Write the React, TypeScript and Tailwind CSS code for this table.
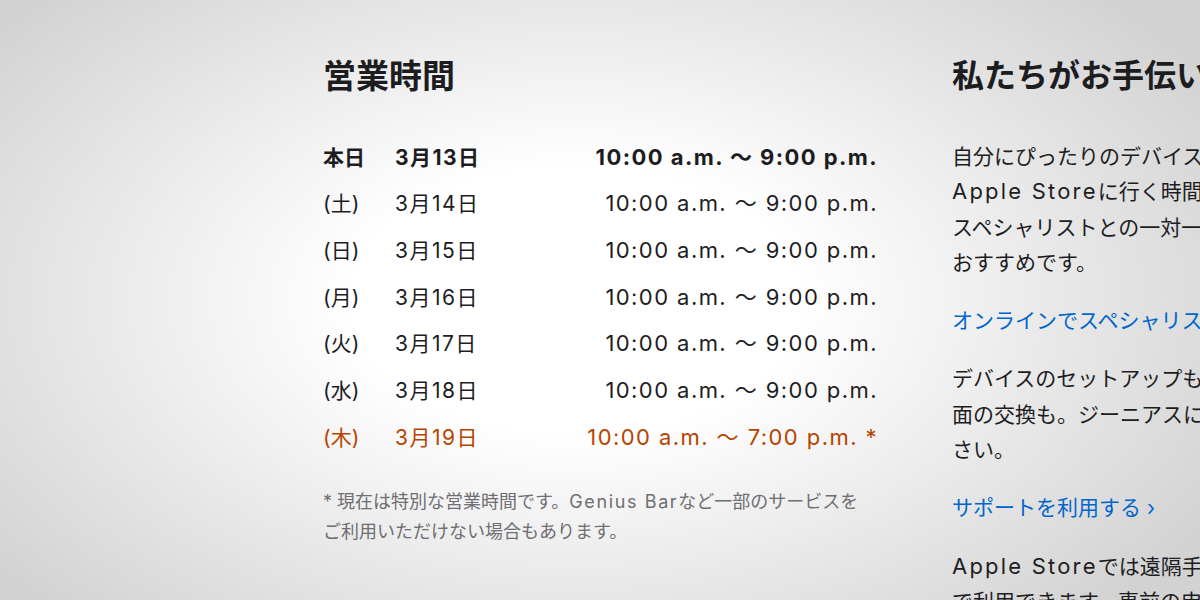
import React from 'react';

const font = { fontFamily: 'Inter, "Noto Sans CJK JP", sans-serif' };

type Row = { day: string; date: string; time: string; today?: boolean; special?: boolean };

const rows: Row[] = [
  { day: '本日', date: '3月13日', time: '10:00 a.m. 〜 9:00 p.m.', today: true },
  { day: '(土)', date: '3月14日', time: '10:00 a.m. 〜 9:00 p.m.' },
  { day: '(日)', date: '3月15日', time: '10:00 a.m. 〜 9:00 p.m.' },
  { day: '(月)', date: '3月16日', time: '10:00 a.m. 〜 9:00 p.m.' },
  { day: '(火)', date: '3月17日', time: '10:00 a.m. 〜 9:00 p.m.' },
  { day: '(水)', date: '3月18日', time: '10:00 a.m. 〜 9:00 p.m.' },
  { day: '(木)', date: '3月19日', time: '10:00 a.m. 〜 7:00 p.m. *', special: true },
];

// latin runs in the reference are set wider than Inter
const Latin = ({ children }: { children: React.ReactNode }) => (
  <span className="text-[22px] tracking-[0.1em]">{children}</span>
);

const HoursRow = ({ row }: { row: Row }) => {
  const color = row.special ? 'text-[#b64400]' : 'text-[#1d1d1f]';
  const weight = row.today ? 'font-bold' : 'font-normal';
  return (
    <div className={`flex items-center h-[46.67px] text-[21px] ${color} ${weight}`}>
      <span className="w-[72px] shrink-0">{row.day}</span>
      <span className="tracking-[0.07em]">{row.date}</span>
      <span className="ml-auto -mr-[1px] text-[22px] tracking-[0.065em]">{row.time}</span>
    </div>
  );
};

const App = () => {
  return (
    <div
      className="w-[1200px] h-[600px] overflow-hidden bg-[radial-gradient(ellipse_740px_440px_at_48%_50%,#ffffff_30%,#d2d2d2_100%)]"
      style={font}
    >
      <div className="flex gap-[75px] pl-[323px] pt-[56px]">
        {/* Store hours */}
        <section className="w-[554px] shrink-0">
          <h2 className="text-[33px] leading-[40px] font-bold text-[#1d1d1f]">営業時間</h2>
          <div className="mt-[38px]">
            {rows.map((r) => (
              <HoursRow key={r.date} row={r} />
            ))}
          </div>
          <p className="mt-[26px] text-[18px] leading-[30px] text-[#6e6e73]">
            * 現在は特別な営業時間です。<span className="tracking-[0.09em]">Genius Bar</span>など一部のサービスを
            <br />
            ご利用いただけない場合もあります。
          </p>
        </section>

        {/* Help */}
        <section className="w-[600px] shrink-0 whitespace-nowrap text-[#1d1d1f]">
          <h2 className="text-[32px] leading-[40px] font-bold">私たちがお手伝いします。</h2>
          <p className="mt-[43px] text-[21px] leading-[35.3px]">
            自分にぴったりのデバイスを見つけたいけれど、
            <br />
            <Latin>Apple Store</Latin>に行く時間がない。そんな時は、
            <br />
            スペシャリストとの一対一のオンラインセッションが
            <br />
            おすすめです。
          </p>
          <a href="#" className="block mt-[23px] text-[21px] leading-[35.3px] text-[#0066cc]">
            オンラインでスペシャリストに相談する ›
          </a>
          <p className="mt-[23px] text-[21px] leading-[35.3px]">
            デバイスのセットアップも、修理も、画
            <br />
            面の交換も。ジーニアスにお任せくだ
            <br />
            さい。
          </p>
          <a href="#" className="block mt-[23px] text-[21px] leading-[35.3px] text-[#0066cc]">
            サポートを利用する ›
          </a>
          <p className="mt-[23px] text-[21px] leading-[35.3px]">
            <Latin>Apple Store</Latin>では遠隔手続きによるサポートも
            <br />
            で利用できます。事前の申し込みが必要です。
          </p>
        </section>
      </div>
    </div>
  );
};

export default App;
